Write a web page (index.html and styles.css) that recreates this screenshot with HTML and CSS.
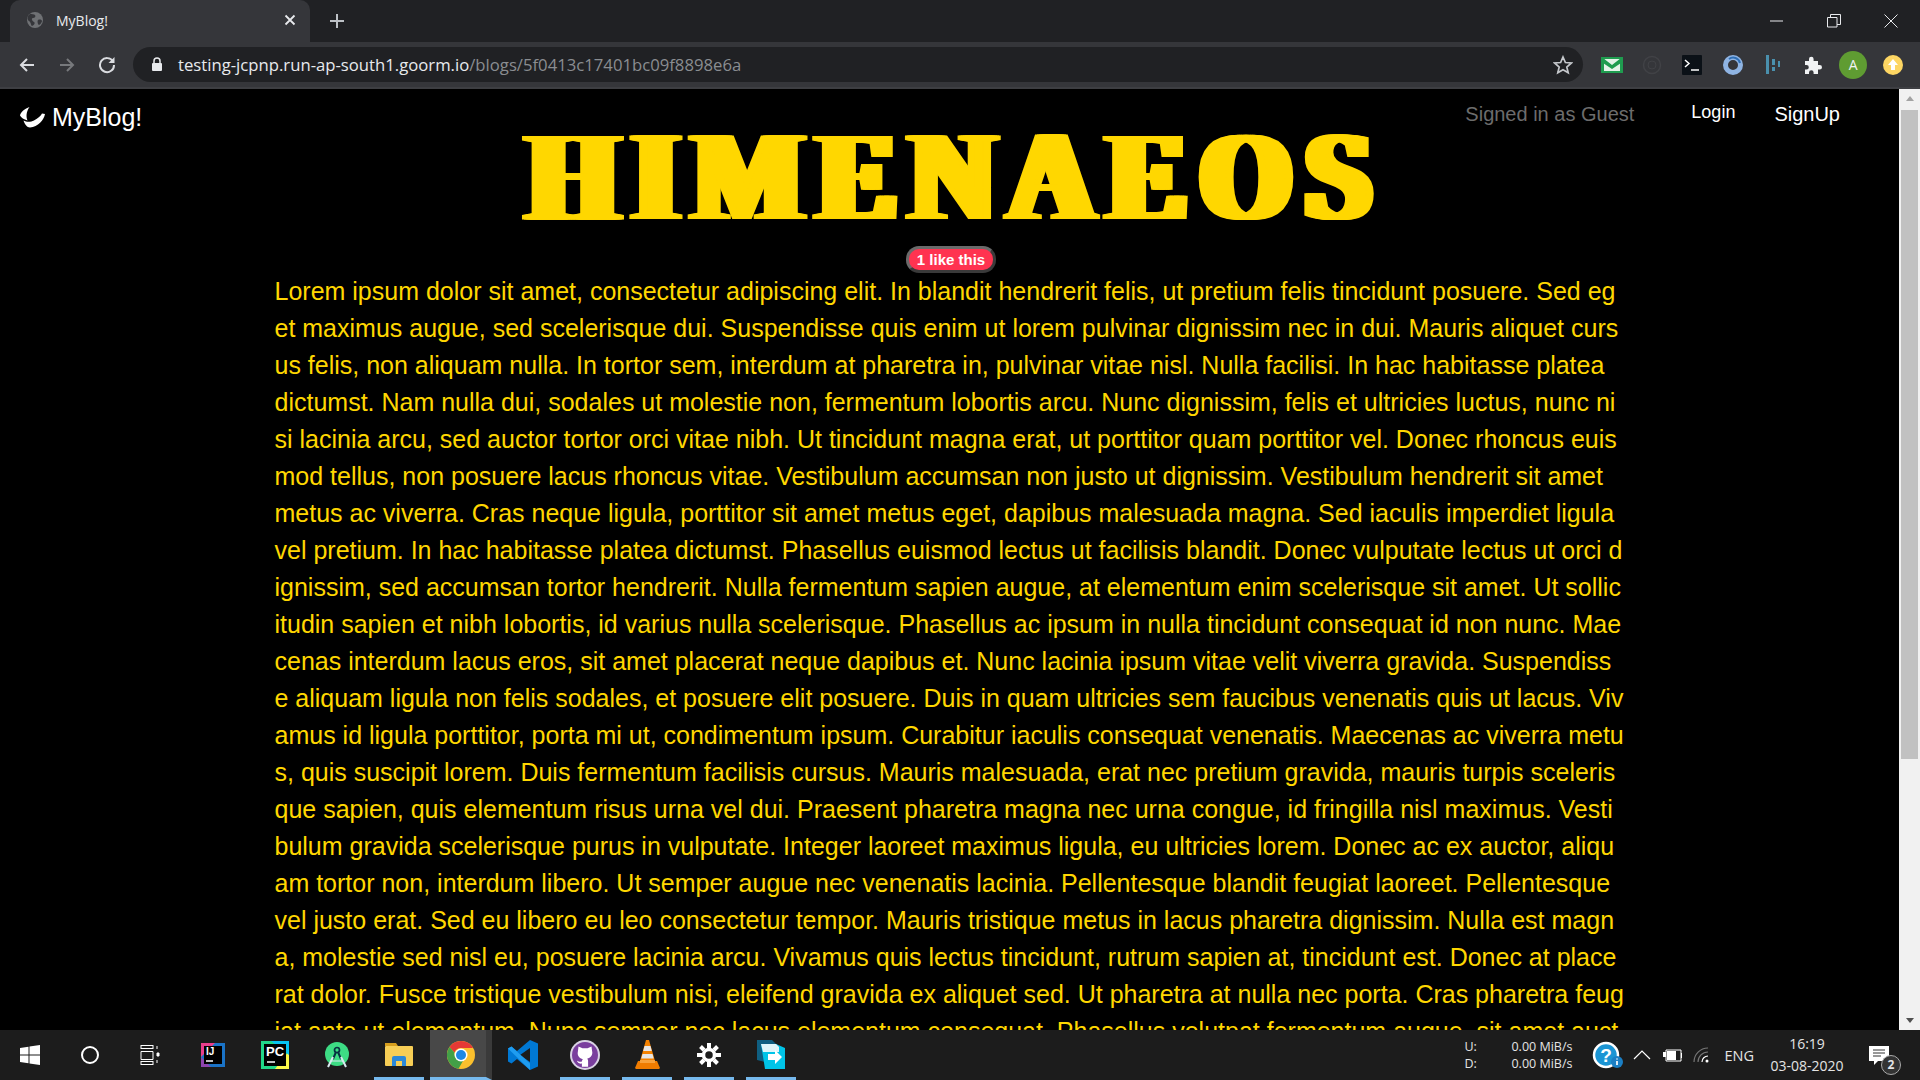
FILE: index.html
```html
<!DOCTYPE html>
<html lang="en">
<head>
    <meta charset="UTF-8">
    <title>MyBlog!</title>
    <link rel="stylesheet" href="styles.css">
</head>
<body>
    <div class="window">
        <!-- Tab strip -->
        <div class="tabstrip">
            <div class="tab">
                <svg class="tab-globe" width="18" height="18" viewBox="0 0 18 18"><circle cx="9" cy="9" r="8" fill="#6f7174"/><path d="M4 3c2 0 4 0 5 1s0 3-2 3-1 3 1 4-1 4-2 4-1-4-3-5-2-5 1-7zM12 9c2-1 4 0 4 1s-2 4-3 4-2-4-1-5z" fill="#35363a"/></svg>
                <span class="tab-title">MyBlog!</span>
                <svg class="tab-close" width="12" height="12" viewBox="0 0 12 12"><path d="M1.500 1.500l9 9M10.500 1.500l-9 9" stroke="#e8eaed" stroke-width="1.800"/></svg>
            </div>
            <svg class="new-tab" width="16" height="16" viewBox="0 0 16 16"><path d="M8 1v14M1 8h14" stroke="#bdc1c6" stroke-width="2"/></svg>
            <div class="window-controls">
                <svg width="14" height="14" viewBox="0 0 14 14"><path d="M0 7h13" stroke="#e8eaed" stroke-width="1"/></svg>
                <svg width="14" height="14" viewBox="0 0 14 14"><path d="M.5 3.500h9.500v9.500h-9.500zM3.500 3.500v-3h10v10h-3.500" fill="none" stroke="#e8eaed"/></svg>
                <svg width="14" height="14" viewBox="0 0 14 14"><path d="M.5.5l13 13M13.500.5l-13 13" stroke="#e8eaed"/></svg>
            </div>
        </div>

        <!-- Address bar -->
        <div class="toolbar">
            <svg class="nav-icon" width="18" height="18" viewBox="0 0 18 18"><path d="M16 9H3M9 3L3 9l6 6" fill="none" stroke="#dadce0" stroke-width="2"/></svg>
            <svg class="nav-icon" width="18" height="18" viewBox="0 0 18 18"><path d="M2 9h13M9 3l6 6-6 6" fill="none" stroke="#77797c" stroke-width="2"/></svg>
            <svg class="nav-icon" width="18" height="18" viewBox="0 0 18 18"><path d="M15 5.500A7 7 0 1 0 16 9" fill="none" stroke="#dadce0" stroke-width="2"/><path d="M16.500 1v6h-6z" fill="#dadce0"/></svg>
            <div class="omnibox">
                <svg class="lock" width="12" height="15" viewBox="0 0 12 15"><path d="M3 6V4a3 3 0 0 1 6 0v2" fill="none" stroke="#e8eaed" stroke-width="1.500"/><rect x="1" y="6" width="10" height="8" rx="1" fill="#e8eaed"/></svg>
                <span class="url">testing-jcpnp.run-ap-south1.goorm.io<span class="url-path">/blogs/5f0413c17401bc09f8898e6a</span></span>
                <svg class="star" width="20" height="20" viewBox="0 0 20 20"><path d="M10 2l2.400 5.500 6 .5-4.600 4 1.400 5.800L10 14.800l-5.200 3L6.200 12 1.600 8l6-.5z" fill="none" stroke="#c4c7cb" stroke-width="1.700"/></svg>
            </div>
            <div class="extensions">
                <svg width="22" height="16" viewBox="0 0 22 16"><rect width="22" height="16" fill="#1f9c4f"/><path d="M3 2h16v12H3z" fill="#e4f3e8"/><path d="M2 1l9 7 9-7v5l-9 6-9-6z" fill="#1f9c4f"/></svg>
                <svg width="20" height="20" viewBox="0 0 20 20"><circle cx="10" cy="10" r="8.500" fill="none" stroke="#414246" stroke-width="1.500"/><circle cx="10" cy="10" r="4" fill="none" stroke="#414246"/></svg>
                <svg width="20" height="20" viewBox="0 0 20 20"><rect width="20" height="20" rx="1" fill="#0b1117"/><path d="M3 5l4 3.500L3 12" fill="none" stroke="#fff" stroke-width="1.500"/><path d="M9 15h8" stroke="#fff" stroke-width="1.500"/></svg>
                <svg width="20" height="20" viewBox="0 0 20 20"><circle cx="10" cy="10" r="7.500" fill="none" stroke="#8fb4e3" stroke-width="5"/><path d="M6 4a7 7 0 0 1 11 4" fill="none" stroke="#2f6fb5" stroke-width="2"/></svg>
                <svg width="16" height="20" viewBox="0 0 16 20"><path d="M1 0h3v19H1zM7 4h3v6H7zM7 12h3v4H7zM13 6h2v6h-2z" fill="#4a90ad"/></svg>
                <svg width="18" height="18" viewBox="0 0 18 18"><path d="M1 5h4V3a2.300 2.300 0 0 1 4.600 0v2H14v4h1.700a2.300 2.300 0 0 1 0 4.600H14V18H9.600v-1.500a2.300 2.300 0 0 0-4.600 0V18H1v-4.500h1.500a2.300 2.300 0 0 0 0-4.600H1z" fill="#f1f3f4"/></svg>
                <span class="avatar">A</span>
                <svg width="20" height="20" viewBox="0 0 20 20"><circle cx="10" cy="10" r="10" fill="#fdd663"/><path d="M10 4l5 6h-3v5H8v-5H5z" fill="#fff"/></svg>
            </div>
        </div>

        <!-- Page -->
        <div class="viewport">
            <div class="page">
                <nav class="navbar">
                    <a class="brand">
                        <svg width="27" height="21" viewBox="0 0 27 21"><path d="M10.500 0C6 1.500 1.500 5 1 8.500c1 2 4 4 7.500 5C7 10 7 5 10.500 0z" fill="#fff"/><path d="M4.500 13.500C8 15.500 12 15 15 13.500c4-2 7-5 8-7l3 .5C25 13 19 20 11 20.500 8 20.500 5.500 17 4.500 13.500z" fill="#fff"/></svg>
                        MyBlog!
                    </a>
                    <span class="signed-in">Signed in as Guest</span>
                    <a class="nav-link login">Login</a>
                    <a class="nav-link signup">SignUp</a>
                </nav>
                <h1 class="blog-title">HIMENAEOS</h1>
                <div class="likes"><button class="like-badge">1 like this</button></div>
                <p class="blog-body">Lorem ipsum dolor sit amet, consectetur adipiscing elit. In blandit hendrerit felis, ut pretium felis tincidunt posuere. Sed eget maximus augue, sed scelerisque dui. Suspendisse quis enim ut lorem pulvinar dignissim nec in dui. Mauris aliquet cursus felis, non aliquam nulla. In tortor sem, interdum at pharetra in, pulvinar vitae nisl. Nulla facilisi. In hac habitasse platea dictumst. Nam nulla dui, sodales ut molestie non, fermentum lobortis arcu. Nunc dignissim, felis et ultricies luctus, nunc nisi lacinia arcu, sed auctor tortor orci vitae nibh. Ut tincidunt magna erat, ut porttitor quam porttitor vel. Donec rhoncus euismod tellus, non posuere lacus rhoncus vitae. Vestibulum accumsan non justo ut dignissim. Vestibulum hendrerit sit amet metus ac viverra. Cras neque ligula, porttitor sit amet metus eget, dapibus malesuada magna. Sed iaculis imperdiet ligula vel pretium. In hac habitasse platea dictumst. Phasellus euismod lectus ut facilisis blandit. Donec vulputate lectus ut orci dignissim, sed accumsan tortor hendrerit. Nulla fermentum sapien augue, at elementum enim scelerisque sit amet. Ut sollicitudin sapien et nibh lobortis, id varius nulla scelerisque. Phasellus ac ipsum in nulla tincidunt consequat id non nunc. Maecenas interdum lacus eros, sit amet placerat neque dapibus et. Nunc lacinia ipsum vitae velit viverra gravida. Suspendisse aliquam ligula non felis sodales, et posuere elit posuere. Duis in quam ultricies sem faucibus venenatis quis ut lacus. Vivamus id ligula porttitor, porta mi ut, condimentum ipsum. Curabitur iaculis consequat venenatis. Maecenas ac viverra metus, quis suscipit lorem. Duis fermentum facilisis cursus. Mauris malesuada, erat nec pretium gravida, mauris turpis scelerisque sapien, quis elementum risus urna vel dui. Praesent pharetra magna nec urna congue, id fringilla nisl maximus. Vestibulum gravida scelerisque purus in vulputate. Integer laoreet maximus ligula, eu ultricies lorem. Donec ac ex auctor, aliquam tortor non, interdum libero. Ut semper augue nec venenatis lacinia. Pellentesque blandit feugiat laoreet. Pellentesque vel justo erat. Sed eu libero eu leo consectetur tempor. Mauris tristique metus in lacus pharetra dignissim. Nulla est magna, molestie sed nisl eu, posuere lacinia arcu. Vivamus quis lectus tincidunt, rutrum sapien at, tincidunt est. Donec at placerat dolor. Fusce tristique vestibulum nisi, eleifend gravida ex aliquet sed. Ut pharetra at nulla nec porta. Cras pharetra feugiat ante ut elementum. Nunc semper nec lacus elementum consequat. Phasellus volutpat fermentum augue, sit amet auctor</p>
            </div>
            <div class="scrollbar">
                <span class="arrow-up"></span>
                <div class="scroll-track"><div class="scroll-thumb"></div></div>
                <span class="arrow-down"></span>
            </div>
        </div>

        <!-- Windows taskbar -->
        <div class="taskbar">
            <div class="sys-btn">
                <svg width="20" height="20" viewBox="0 0 20 20"><path d="M0 3l8.500-1.200v7.700H0zM9.500 1.600L20 0v9.500H9.500zM0 10.500h8.500v7.700L0 17zM9.500 10.500H20V20L9.500 18.400z" fill="#fff"/></svg>
            </div>
            <div class="sys-btn">
                <svg width="20" height="20" viewBox="0 0 20 20"><circle cx="10" cy="10" r="8" fill="none" stroke="#fff" stroke-width="2"/></svg>
            </div>
            <div class="sys-btn">
                <svg width="20" height="20" viewBox="0 0 20 20"><path d="M1 .5h12M1 3.500h12M1 6.500h12v8H1zM1 16.500h12M1 19.500h12M1 0v4M13 0v4M1 16v4M13 16v4" fill="none" stroke="#fff"/><path d="M17 1v3M17 8h2v3h-2zM17 15v3" stroke="#fff" fill="#fff"/></svg>
            </div>
            <div class="app-btn">
                <svg width="24" height="24" viewBox="0 0 24 24"><rect width="24" height="24" fill="#1a73c7"/><path d="M0 0h14L0 14z" fill="#e83e8c"/><path d="M0 14v10h10z" fill="#8e44ad"/><rect x="3" y="3" width="18" height="18" fill="#000"/><text x="5" y="12" class="icon-label">IJ</text><path d="M5 18h7" stroke="#fff" stroke-width="1.500"/></svg>
            </div>
            <div class="app-btn">
                <svg width="28" height="28" viewBox="0 0 28 28"><rect width="28" height="28" fill="#21d789"/><path d="M14 28L28 10v18z" fill="#fcf84a"/><path d="M10 0h18v14z" fill="#07c3f2"/><rect x="3" y="3" width="22" height="22" fill="#000"/><text x="5" y="15" class="icon-label pc">PC</text><path d="M6 21h8" stroke="#fff" stroke-width="1.500"/></svg>
            </div>
            <div class="app-btn">
                <svg width="24" height="26" viewBox="0 0 24 26"><circle cx="12" cy="12" r="12" fill="#3ddc84"/><circle cx="12" cy="8" r="2.500" fill="none" stroke="#073042" stroke-width="1.700"/><path d="M11 10l-3 7M13 10l3 7" stroke="#073042" stroke-width="2"/><path d="M8 15L3 25M16 15l5 10" stroke="#d8eaf0" stroke-width="2"/><path d="M6 19h12" stroke="#d8eaf0"/></svg>
            </div>
            <div class="app-btn active-indicator">
                <svg width="28" height="23" viewBox="0 0 28 23"><path d="M0 0h11l2 3h-13z" fill="#d69e1e"/><rect y="3" width="28" height="20" rx="1" fill="#f7ce56"/><path d="M7 23v-8a2 2 0 0 1 2-2h10a2 2 0 0 1 2 2v8h-4v-5h-6v5z" fill="#2b88d8"/></svg>
            </div>
            <div class="app-btn active-indicator current">
                <svg width="28" height="28" viewBox="0 0 28 28"><circle cx="14" cy="14" r="14" fill="#fbc02d"/><path d="M14 0a14 14 0 0 1 12.100 7H14a7 7 0 0 0-6.500 4.500L2.500 6A14 14 0 0 1 14 0z" fill="#e53935"/><path d="M2.500 6a14 14 0 0 0 9 21.800l5-8.800a7 7 0 0 1-9-7.500z" fill="#43a047"/><circle cx="14" cy="14" r="6.500" fill="#fff"/><circle cx="14" cy="14" r="5" fill="#1e88e5"/></svg>
            </div>
            <div class="app-btn">
                <svg width="30" height="30" viewBox="0 0 30 30"><path d="M22 0l8 3.500v23L22 30 9 19l-5.500 4.500L0 21.500v-13L3.500 6.500 9 11z" fill="#0078d4"/><path d="M22 8L12 15l10 7z" fill="#1c1c1c"/><path d="M0 8.500l3.500-2L22 23.500V30z" fill="#1f9cf0"/></svg>
            </div>
            <div class="app-btn active-indicator">
                <svg width="30" height="30" viewBox="0 0 30 30"><circle cx="15" cy="15" r="15" fill="#d9d2e4"/><circle cx="15" cy="15" r="13" fill="#7a3f9e"/><path d="M8.500 6.500l4 1.700h5l4-1.700.6 4.500c1 4-1.500 7-5 7.700.8.600 1 1.500 1 2.500v5.500h-6.200v-3.200c-3 .6-4.200-1-5-2.700 1.700.4 2.600 1.600 5 .8.100-1 .3-1.900 1-2.400-3.500-.7-6-3.700-5-7.700z" fill="#fff"/></svg>
            </div>
            <div class="app-btn active-indicator">
                <svg width="25" height="29" viewBox="0 0 25 29"><path d="M11 0h3l6 21H5z" fill="#f58200"/><path d="M9.500 6h6l1.300 5H8.200zM7.500 14h10l1.200 4.500H6.300z" fill="#e6e6e6"/><path d="M3 21h19l3 7-1 1H1l-1-1z" fill="#f07c00"/><path d="M5 20h15v3H5z" fill="#f9a23b"/></svg>
            </div>
            <div class="app-btn active-indicator">
                <svg width="24" height="24" viewBox="0 0 24 24"><path d="M12 6.500a5.500 5.500 0 1 0 0 11 5.500 5.500 0 0 0 0-11z" fill="none" stroke="#fff" stroke-width="3.500"/><path d="M12 0v5M12 19v5M0 12h5M19 12h5M3.500 3.500l3.500 3.500M17 17l3.500 3.500M3.500 20.500L7 17M17 7l3.500-3.500" stroke="#fff" stroke-width="4"/></svg>
            </div>
            <div class="app-btn active-indicator">
                <svg width="28" height="29" viewBox="0 0 28 29"><path d="M0 0h15l5 5v20L0 20z" fill="#0f5f82"/><path d="M4 4h15l9 4v21H8z" fill="#00c4e8"/><path d="M4 4h15l3 3v5H6z" fill="#dff6fb"/><path d="M11 14h7v-4l7 7-7 7v-4h-7z" fill="#fff"/></svg>
            </div>

            <div class="tray">
                <div class="netspeed">
                    <span class="net-label">U:</span><span class="net-value">0.00 MiB/s</span>
                    <span class="net-label">D:</span><span class="net-value">0.00 MiB/s</span>
                </div>
                <svg class="tray-help" width="32" height="28" viewBox="0 0 32 28"><circle cx="14" cy="14" r="12" fill="#1b95d4" stroke="#fff" stroke-width="2.500"/><text x="14" y="21" class="help-mark">?</text><circle cx="25" cy="21" r="6" fill="#1b7fc4"/><path d="M25 20v4M25 17.500v1" stroke="#fff" stroke-width="1.700"/></svg>
                <svg class="tray-icon" width="18" height="10" viewBox="0 0 18 10"><path d="M1 9l8-8 8 8" fill="none" stroke="#fff" stroke-width="1.200"/></svg>
                <svg class="tray-icon" width="20" height="14" viewBox="0 0 20 14"><path d="M4 2h15v11H4z" fill="none" stroke="#fff"/><path d="M5 3h9v9H5z" fill="#fff"/><path d="M19 5h1v5h-1zM0 7h3M1 4h3v5H1z" fill="#fff"/></svg>
                <svg class="tray-icon" width="18" height="16" viewBox="0 0 18 16"><path d="M1 15A14 14 0 0 1 15 1M5 15A10 10 0 0 1 15 5" fill="none" stroke="#777" stroke-width="1.200"/><path d="M9 15a6 6 0 0 1 6-6" fill="none" stroke="#fff" stroke-width="1.200"/><circle cx="14" cy="14" r="1.500" fill="#fff"/></svg>
                <span class="lang">ENG</span>
                <div class="clock"><span>16:19</span><span>03-08-2020</span></div>
                <div class="notify">
                    <svg width="20" height="19" viewBox="0 0 20 19"><path d="M0 0h20v15H9l-4 4v-4H0z" fill="#fff"/><path d="M4 4h12M4 7h12M4 10h8" stroke="#333" stroke-width="1"/></svg>
                    <span class="notify-count">2</span>
                </div>
            </div>
        </div>
    </div>
</body>
</html>
```

FILE: styles.css
```css
* {
    box-sizing: border-box;
}

body {
    margin: 0;
    font-family: "Liberation Sans", Arial, sans-serif;
    background-color: #000;
}

.window {
    display: flex;
    flex-direction: column;
    width: 1920px;
    height: 1080px;
    overflow: hidden;
}

/* Tab strip */
.tabstrip {
    display: flex;
    align-items: center;
    height: 42px;
    flex-shrink: 0;
    padding-left: 10px;
    background-color: #202124;
}

.tab {
    display: flex;
    align-items: center;
    width: 300px;
    height: 42px;
    padding: 0 14px 2px 16px;
    border-radius: 10px 10px 0 0;
    background-color: #35363a;
}

.tab-title {
    flex-grow: 1;
    margin-left: 12px;
    font-family: "Open Sans", sans-serif;
    font-size: 14px;
    color: #e8eaed;
}

.new-tab {
    margin-left: 19px;
}

.window-controls {
    display: flex;
    gap: 43px;
    margin-left: auto;
    padding-right: 22px;
}

/* Address bar */
.toolbar {
    display: flex;
    align-items: center;
    height: 47px;
    flex-shrink: 0;
    padding-left: 18px;
    gap: 22px;
    background-color: #35363a;
    border-bottom: 2px solid #3e3f43;
}

.nav-icon {
    flex-shrink: 0;
}

.omnibox {
    display: flex;
    align-items: center;
    width: 1450px;
    height: 35px;
    margin-left: -5px;
    padding: 0 10px 0 18px;
    border-radius: 18px;
    background-color: #202124;
}

.url {
    flex-grow: 1;
    margin-left: 15px;
    font-family: "Open Sans", sans-serif;
    font-size: 16.700px;
    color: #e8eaed;
}

.url-path {
    color: #8a8d91;
}

.extensions {
    display: grid;
    grid-template-columns: repeat(8, 40.200px);
    align-items: center;
    justify-items: center;
    margin-left: -13px;
}

.avatar {
    width: 28px;
    height: 28px;
    border-radius: 50%;
    background-color: #5f9c32;
    color: #f1f3f4;
    font-family: "Open Sans", sans-serif;
    font-size: 14px;
    line-height: 28px;
    text-align: center;
}

/* Page */
.viewport {
    display: flex;
    flex-grow: 1;
    min-height: 0;
    background-color: #000;
}

.page {
    flex-grow: 1;
    overflow: hidden;
}

.navbar {
    display: flex;
    align-items: center;
    height: 46px;
    padding: 5px 59px 0 19px;
}

.brand {
    display: flex;
    align-items: center;
    gap: 6px;
    margin-top: 6px;
    font-size: 25px;
    color: #fff;
}

.signed-in {
    margin-left: auto;
    font-size: 20px;
    color: #6c6c6c;
}

.nav-link {
    color: #fff;
}

.login {
    margin-left: 57px;
    margin-top: -4px;
    font-size: 18px;
}

.signup {
    margin-left: 39px;
    font-size: 20px;
}

/* heavy poster look: stems widened with horizontal shadows */
.blog-title {
    margin: 0;
    height: 102px;
    font-family: "Liberation Serif", serif;
    font-size: 128px;
    font-weight: bold;
    line-height: 82px;
    letter-spacing: 17.400px;
    text-indent: 17px;
    text-align: center;
    white-space: nowrap;
    color: #ffd700;
    transform: scaleX(0.9);
    text-shadow: -9px 0 #ffd700, -7px 0 #ffd700, -5px 0 #ffd700, -3px 0 #ffd700, -1px 0 #ffd700, 1px 0 #ffd700, 3px 0 #ffd700, 5px 0 #ffd700, 7px 0 #ffd700, 9px 0 #ffd700;
}

.likes {
    display: flex;
    justify-content: center;
    margin-top: 9px;
}

.like-badge {
    height: 27px;
    margin-left: 3px;
    padding: 0 8px;
    border: 3px solid;
    border-color: #6a6a6a #3a3a3a #3a3a3a #6a6a6a;
    border-radius: 13px;
    background-color: #ff3350;
    color: #fff;
    font-family: "Liberation Sans", Arial, sans-serif;
    font-size: 15px;
    font-weight: bold;
}

.blog-body {
    width: 1350px;
    margin: 0 auto;
    font-size: 25px;
    line-height: 37px;
    color: #ffd700;
    word-break: break-all;
}

/* Scrollbar */
.scrollbar {
    display: flex;
    flex-direction: column;
    align-items: center;
    width: 21px;
    flex-shrink: 0;
    background-color: #f1f1f1;
}

.arrow-up,
.arrow-down {
    flex-shrink: 0;
    width: 0;
    height: 0;
    margin: 7px 0;
    border-left: 4.500px solid transparent;
    border-right: 4.500px solid transparent;
}

.arrow-up {
    border-bottom: 5px solid #a3a3a3;
}

.arrow-down {
    border-top: 5px solid #505050;
}

.scroll-track {
    flex-grow: 1;
    width: 100%;
    padding: 2px;
}

.scroll-thumb {
    height: 649px;
    background-color: #c1c1c1;
}

/* Windows taskbar */
.taskbar {
    display: flex;
    align-items: stretch;
    height: 50px;
    flex-shrink: 0;
    background-color: #1c1c1c;
}

.sys-btn {
    display: flex;
    align-items: center;
    justify-content: center;
    width: 60px;
}

.sys-btn:nth-child(3) {
    margin-right: 2px;
}

.app-btn {
    display: flex;
    align-items: center;
    justify-content: center;
    width: 50px;
    margin: 0 6px;
    padding-top: 2px;
    border-bottom: 3px solid transparent;
}

.active-indicator {
    border-bottom-color: #76b9ed;
}

.current {
    width: 62px;
    margin: 0;
    padding-left: 6px;
    border-right: 6px solid #3a3a3a;
    background-color: #484848;
}

.icon-label {
    font-family: "Liberation Sans", sans-serif;
    font-size: 10px;
    font-weight: bold;
    fill: #fff;
}

.icon-label.pc {
    font-size: 13px;
}

.help-mark {
    font-family: "Liberation Sans", sans-serif;
    font-size: 19px;
    font-weight: bold;
    fill: #fff;
    text-anchor: middle;
}

.tray {
    display: flex;
    align-items: center;
    margin-left: auto;
    margin-right: 11px;
    color: #e4e4e4;
    font-family: "Open Sans", sans-serif;
}

.netspeed {
    display: grid;
    grid-template-columns: 47px auto;
    font-size: 12.500px;
    line-height: 17px;
}

.tray-help {
    margin-left: 20px;
}

.tray-icon {
    margin-left: 11px;
}

.tray-help + .tray-icon {
    margin-left: 9px;
}

.lang {
    margin-left: 13px;
    font-size: 14.500px;
}

.clock {
    display: flex;
    flex-direction: column;
    align-items: center;
    gap: 3px;
    width: 90px;
    margin-left: 8px;
    margin-top: -2px;
    font-size: 14px;
    line-height: 19px;
}

.notify {
    position: relative;
    display: flex;
    align-items: center;
    width: 57px;
    height: 100%;
    padding-left: 17px;
}

.notify-count {
    position: absolute;
    left: 29px;
    top: 25px;
    width: 20px;
    height: 20px;
    border: 1px solid #aaa;
    border-radius: 50%;
    background-color: #333;
    font-size: 12px;
    font-weight: bold;
    line-height: 18px;
    text-align: center;
}
```
